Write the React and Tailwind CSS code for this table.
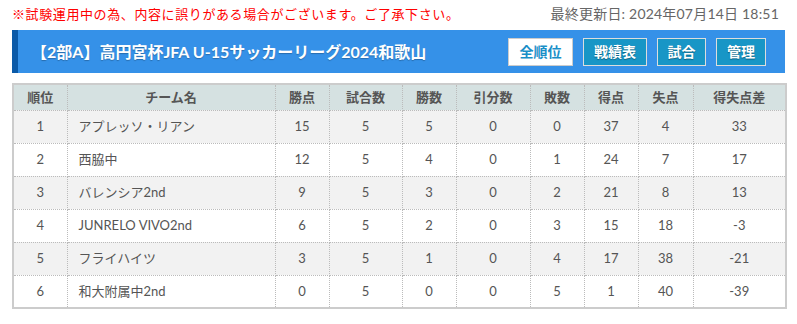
const rows = [
  { rank: 1, team: 'アプレッソ・リアン', pts: 15, games: 5, win: 5, draw: 0, lose: 0, gf: 37, ga: 4, diff: 33 },
  { rank: 2, team: '西脇中', pts: 12, games: 5, win: 4, draw: 0, lose: 1, gf: 24, ga: 7, diff: 17 },
  { rank: 3, team: 'バレンシア2nd', pts: 9, games: 5, win: 3, draw: 0, lose: 2, gf: 21, ga: 8, diff: 13 },
  { rank: 4, team: 'JUNRELO VIVO2nd', pts: 6, games: 5, win: 2, draw: 0, lose: 3, gf: 15, ga: 18, diff: -3 },
  { rank: 5, team: 'フライハイツ', pts: 3, games: 5, win: 1, draw: 0, lose: 4, gf: 17, ga: 38, diff: -21 },
  { rank: 6, team: '和大附属中2nd', pts: 0, games: 5, win: 0, draw: 0, lose: 5, gf: 1, ga: 40, diff: -39 },
];

const headers = ['順位', 'チーム名', '勝点', '試合数', '勝数', '引分数', '敗数', '得点', '失点', '得失点差'];
const widths = [54, 208, 54, 73, 54, 74, 54, 54, 55, 93];

export default function App() {
  return (
    <div className="min-h-screen bg-white px-3 pt-[5px] font-['Lato','Noto_Sans_CJK_JP',sans-serif]">
      {/* Notice */}
      <div className="flex items-center justify-between text-[13px] leading-[18px]">
        <span className="tracking-[0.6px] text-[#ff0000]">※試験運用中の為、内容に誤りがある場合がございます。ご了承下さい。</span>
        <span className="pr-[6px] text-[14px] tracking-[0.2px] text-[#666]">最終更新日: 2024年07月14日 18:51</span>
      </div>

      {/* Title bar */}
      <div className="mt-[7px] flex h-[43px] items-center justify-between border-l-[6px] border-[#0b5aa8] bg-[#3591e8] pl-[13px] pr-[19px]">
        <h1 className="text-[16px] font-bold text-white [text-shadow:0_1px_1px_rgba(0,0,0,0.25)]">
          【2部A】高円宮杯JFA U-15サッカーリーグ2024和歌山
        </h1>
        <div className="flex gap-[10px]">
          <button className="h-[28px] w-[65px] border border-[#ccc] bg-white text-[14px] font-bold text-[#1a8fc8]">全順位</button>
          <button className="h-[28px] w-[64px] border border-[#ddd] bg-[#1896c6] text-[14px] font-bold text-white [text-shadow:0_1px_1px_rgba(0,0,0,0.35)]">戦績表</button>
          <button className="h-[28px] w-[49px] border border-[#ddd] bg-[#1896c6] text-[14px] font-bold text-white [text-shadow:0_1px_1px_rgba(0,0,0,0.35)]">試合</button>
          <button className="h-[28px] w-[50px] border border-[#ddd] bg-[#1896c6] text-[14px] font-bold text-white [text-shadow:0_1px_1px_rgba(0,0,0,0.35)]">管理</button>
        </div>
      </div>

      {/* Standings */}
      <table className="mt-[10px] w-[773px] table-fixed border-collapse border-2 border-[#ccc] text-[13px] text-[#555]">
        <colgroup>
          {widths.map((w, i) => (
            <col key={i} style={{ width: w }} />
          ))}
        </colgroup>
        <thead>
          <tr className="h-[26px] bg-[#d5e1e1]">
            {headers.map((h) => (
              <th key={h} className="border border-dotted border-[#bbb] font-bold text-[#555]">{h}</th>
            ))}
          </tr>
        </thead>
        <tbody>
          {rows.map((r, i) => (
            <tr key={r.rank} className={`h-[33px] ${i % 2 === 0 ? 'bg-[#f2f2f2]' : 'bg-white'}`}>
              <td className="border border-dotted border-[#bbb] text-center">{r.rank}</td>
              <td className="border border-dotted border-[#bbb] pl-[11px] text-left">{r.team}</td>
              <td className="border border-dotted border-[#bbb] text-center">{r.pts}</td>
              <td className="border border-dotted border-[#bbb] text-center">{r.games}</td>
              <td className="border border-dotted border-[#bbb] text-center">{r.win}</td>
              <td className="border border-dotted border-[#bbb] text-center">{r.draw}</td>
              <td className="border border-dotted border-[#bbb] text-center">{r.lose}</td>
              <td className="border border-dotted border-[#bbb] text-center">{r.gf}</td>
              <td className="border border-dotted border-[#bbb] text-center">{r.ga}</td>
              <td className="border border-dotted border-[#bbb] text-center">{r.diff}</td>
            </tr>
          ))}
        </tbody>
      </table>
    </div>
  );
}
